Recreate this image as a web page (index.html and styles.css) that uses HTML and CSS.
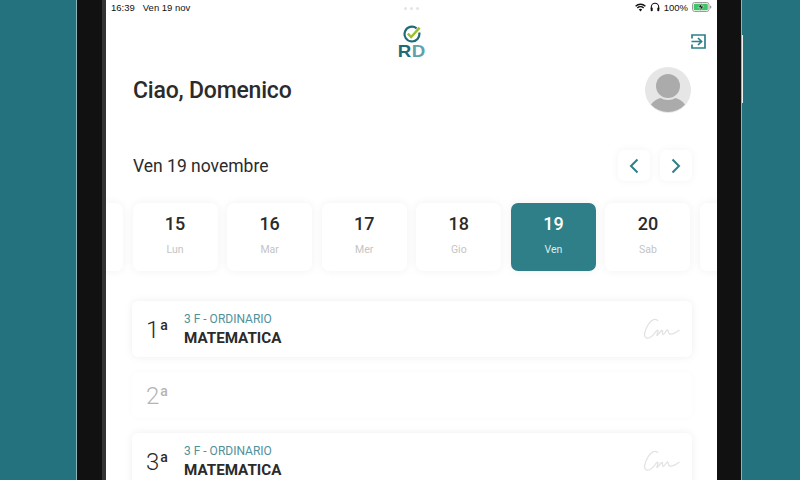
FILE: index.html
```html
<!DOCTYPE html>
<html lang="it">
<head>
    <meta charset="UTF-8">
    <meta name="viewport" content="width=device-width, initial-scale=1.0">
    <title>Registro RD</title>
    <link rel="stylesheet" href="styles.css">
</head>
<body>
    <div class="side side-left"></div>
    <div class="bezel bezel-left"></div>

    <main class="screen">
        <div class="status-bar">
            <span class="status-time">16:39</span>
            <span>Ven 19 nov</span>
            <span class="status-dots"><i></i><i></i><i></i></span>
            <div class="status-right">
                <svg class="status-icon" width="11" height="9" viewBox="0 0 11 9">
                    <path d="M0.6 3.2a7 7 0 0 1 9.8 0M2.3 5a4.6 4.6 0 0 1 6.4 0" fill="none" stroke="#111" stroke-width="1.4"/>
                    <path d="M5.5 8.6 3.8 6.6a2.5 2.5 0 0 1 3.4 0z" fill="#111"/>
                </svg>
                <svg class="status-icon" width="10" height="10" viewBox="0 0 10 10">
                    <path d="M1.3 7V5a3.7 3.7 0 0 1 7.4 0v2" fill="none" stroke="#111" stroke-width="1.1"/>
                    <rect x="0.7" y="5.6" width="2" height="3.6" rx="0.8" fill="#111"/>
                    <rect x="7.3" y="5.6" width="2" height="3.6" rx="0.8" fill="#111"/>
                </svg>
                <span class="status-pct">100%</span>
                <svg class="status-icon" width="20" height="10" viewBox="0 0 20 10">
                    <rect x="0.5" y="0.5" width="16.5" height="9" rx="2.2" fill="#fff" stroke="#9a9a9a"/>
                    <rect x="1.7" y="1.7" width="14.1" height="6.6" rx="1.2" fill="#3fc466"/>
                    <path d="M18 3.4c1 .2 1.4.8 1.4 1.6s-.4 1.4-1.4 1.6z" fill="#9a9a9a"/>
                    <path d="M10.2 0.8 6 5.6h2.6L7.6 9.2l4.3-5H9.3z" fill="#111" stroke="#fff" stroke-width="0.5"/>
                </svg>
            </div>
        </div>

        <header class="top-bar">
            <div class="logo">
                <svg width="20" height="19" viewBox="0 0 20 19">
                    <path d="M14.6 3.3a7.4 7.4 0 1 0 2.6 4.2" fill="none" stroke="#1f6b78" stroke-width="2.2"/>
                    <path d="M5.8 8.6 9.2 12 17.6 2.6" fill="none" stroke="#9dbf2e" stroke-width="2.4"/>
                </svg>
                <div class="logo-text"><span class="logo-r">R</span><span class="logo-d">D</span></div>
            </div>
            <svg class="exit-icon" width="15" height="15" viewBox="0 0 15 15">
                <path d="M1 4.500V1h13v13H1v-3.500" fill="none" stroke="#2f7f89" stroke-width="1.700"/>
                <path d="M0.500 7.500H10M7 4l3.600 3.500L7 11" fill="none" stroke="#2f7f89" stroke-width="1.700"/>
            </svg>
        </header>

        <section class="hello">
            <h1>Ciao, Domenico</h1>
            <div class="avatar">
                <svg width="46" height="46" viewBox="0 0 46 46">
                    <circle cx="23" cy="23" r="23" fill="#e6e6e6"/>
                    <circle cx="23" cy="19" r="12" fill="#ababab"/>
                    <path d="M6 37.500c3-4 7-6 9.500-6.500 4 2.600 11 2.600 15 0 2.500.5 6.500 2.500 9.500 6.500a23 23 0 0 1-34 0z" fill="#ababab"/>
                </svg>
            </div>
        </section>

        <section class="date-row">
            <h2>Ven 19 novembre</h2>
            <div class="date-nav">
                <button class="nav-btn">
                    <svg width="10" height="16" viewBox="0 0 10 16"><path d="M8.500 1.500 2 8l6.500 6.500" fill="none" stroke="#2f7f89" stroke-width="2"/></svg>
                </button>
                <button class="nav-btn">
                    <svg width="10" height="16" viewBox="0 0 10 16"><path d="M1.500 1.500 8 8l-6.500 6.500" fill="none" stroke="#2f7f89" stroke-width="2"/></svg>
                </button>
            </div>
        </section>

        <section class="days">
            <div class="day"></div>
            <div class="day"><b>15</b><span>Lun</span></div>
            <div class="day"><b>16</b><span>Mar</span></div>
            <div class="day"><b>17</b><span>Mer</span></div>
            <div class="day"><b>18</b><span>Gio</span></div>
            <div class="day active"><b>19</b><span>Ven</span></div>
            <div class="day"><b>20</b><span>Sab</span></div>
            <div class="day"></div>
        </section>

        <section class="lessons">
            <div class="lesson">
                <div class="hour">1<sup>a</sup></div>
                <div class="lesson-info">
                    <div class="lesson-class">3 F - ORDINARIO</div>
                    <div class="lesson-name">MATEMATICA</div>
                </div>
                <svg class="sign" width="37" height="22" viewBox="0 0 37 22">
                    <path d="M15 3C13 0 8.500 1 5 7 1.500 13 0 19 3.500 20c3.500.8 7-3 9-6 1-1.500 2.500-2.500 2.500-1 0 1.500-1.500 4-1 4.500.8.5 3.500-5 5-5 1.200 0 0 3.500 1 4 1.500.5 3-4.500 4.500-4.500 1 0 .5 3.500 2 4 2 .5 6-1 10-4" fill="none" stroke="#e2e2e2" stroke-width="1.300"/>
                </svg>
            </div>
            <div class="lesson empty">
                <div class="hour">2<sup>a</sup></div>
            </div>
            <div class="lesson">
                <div class="hour">3<sup>a</sup></div>
                <div class="lesson-info">
                    <div class="lesson-class">3 F - ORDINARIO</div>
                    <div class="lesson-name">MATEMATICA</div>
                </div>
                <svg class="sign" width="37" height="22" viewBox="0 0 37 22">
                    <path d="M15 3C13 0 8.500 1 5 7 1.500 13 0 19 3.500 20c3.500.8 7-3 9-6 1-1.500 2.500-2.500 2.500-1 0 1.500-1.500 4-1 4.500.8.5 3.500-5 5-5 1.200 0 0 3.500 1 4 1.500.5 3-4.500 4.500-4.500 1 0 .5 3.500 2 4 2 .5 6-1 10-4" fill="none" stroke="#e2e2e2" stroke-width="1.300"/>
                </svg>
            </div>
        </section>
    </main>

    <div class="bezel bezel-right"></div>
    <div class="side side-right"><div class="side-button"></div></div>
</body>
</html>
```

FILE: styles.css
```css
html, body {
    height: 480px;
    overflow: hidden;
}

body {
    margin: 0;
    display: flex;
    font-family: Roboto, sans-serif;
    color: #2b2b2b;
    background: #24727e;
}

/* device frame */
.side {
    background: #24727e;
}

.side-left {
    width: 76px;
    border-right: 1px solid #8fb3b9;
}

.side-right {
    flex: 1;
    border-left: 1px solid #8fb3b9;
}

.side-button {
    width: 1px;
    height: 68px;
    margin: 35px 0 0 0;
    background: #eef3f4;
}

.bezel {
    background: #111;
}

.bezel-left {
    width: 25px;
    border-right: 4px solid #333;
}

.bezel-right {
    width: 24px;
}

.screen {
    width: 611px;
    background: #fff;
    overflow: hidden;
    display: flex;
    flex-direction: column;
}

.screen > * {
    flex-shrink: 0;
}

/* status bar */
.status-bar {
    position: relative;
    height: 14px;
    display: flex;
    align-items: center;
    padding: 0 5px;
    font-family: "Liberation Sans", sans-serif;
    font-size: 9.500px;
    color: #111;
}

.status-time {
    margin-right: 8px;
}

.status-dots {
    position: absolute;
    left: 298px;
    top: 7px;
    display: flex;
    gap: 3px;
}

.status-dots i {
    width: 3px;
    height: 3px;
    border-radius: 50%;
    background: #e4e4e4;
}

.status-right {
    margin-left: auto;
    display: flex;
    align-items: center;
    gap: 4px;
}

/* logo */
.top-bar {
    position: relative;
    height: 50px;
    display: flex;
    justify-content: center;
}

.logo {
    display: flex;
    flex-direction: column;
    align-items: center;
    padding-top: 11px;
}

.logo-text {
    font-family: "Liberation Sans", sans-serif;
    font-size: 17px;
    font-weight: bold;
    line-height: 15px;
    letter-spacing: 0.5px;
    transform: scaleX(1.1);
}

.logo-r {
    color: #1f6b78;
}

.logo-d {
    color: #5fa2ac;
}

.exit-icon {
    position: absolute;
    top: 20px;
    right: 11px;
}

.hello {
    height: 46px;
    margin-top: 3px;
    padding: 0 26px 0 27px;
    display: flex;
    align-items: center;
    justify-content: space-between;
}

.hello h1 {
    margin: 0;
    font-size: 23px;
    font-weight: 500;
    letter-spacing: -0.2px;
}

.avatar {
    height: 46px;
}

.date-row {
    margin-top: 37px;
    padding: 0 25px 0 27px;
    height: 31px;
    display: flex;
    align-items: center;
    justify-content: space-between;
}

.date-row h2 {
    margin: 0;
    font-size: 17.500px;
    font-weight: 400;
}

.date-nav {
    display: flex;
    gap: 10px;
}

.nav-btn {
    width: 32px;
    height: 31px;
    padding: 0;
    border: none;
    border-radius: 6px;
    background: #fff;
    box-shadow: 0 0 8px rgba(0, 0, 0, 0.05);
    display: flex;
    align-items: center;
    justify-content: center;
}

/* calendar strip */
.days {
    margin-top: 22px;
    display: flex;
    justify-content: center;
    gap: 9.600px;
}

.day {
    flex: 0 0 85px;
    height: 68px;
    box-sizing: border-box;
    padding-top: 9px;
    border-radius: 7px;
    background: #fff;
    box-shadow: 0 0 10px rgba(0, 0, 0, 0.06);
    display: flex;
    flex-direction: column;
    align-items: center;
}

.day b {
    font-size: 18px;
    font-weight: 500;
    line-height: 24px;
}

.day span {
    margin-top: 6px;
    font-size: 10.500px;
    line-height: 16px;
    color: #c4c4c4;
}

.day.active {
    background: #2f7f89;
    color: #fff;
}

.day.active span {
    color: #dcebed;
}

/* lessons */
.lessons {
    margin-top: 30px;
    padding: 0 25px 0 26px;
    display: flex;
    flex-direction: column;
    gap: 15px;
}

.lesson {
    flex: 0 0 56px;
    height: 56px;
    display: flex;
    align-items: center;
    padding: 0 12px 0 14px;
    border-radius: 6px;
    background: #fff;
    box-shadow: 0 0 9px rgba(0, 0, 0, 0.07);
}

.lesson.empty {
    flex-basis: 46px;
    height: 46px;
    box-shadow: 0 0 9px rgba(0, 0, 0, 0.025);
    color: #b4b4b4;
}

.hour {
    width: 38px;
    padding-top: 1px;
    font-size: 24px;
    line-height: 24px;
    font-weight: 300;
}

.hour sup {
    font-size: 14px;
    font-weight: 500;
    line-height: 0;
    margin-left: 1px;
    vertical-align: 8px;
}

.lesson-info {
    flex: 1;
    padding-top: 2px;
}

.lesson-class {
    font-size: 12px;
    line-height: 15px;
    color: #4f919b;
}

.lesson-name {
    margin-top: 1px;
    font-size: 15.200px;
    line-height: 20px;
    font-weight: 700;
}
```
